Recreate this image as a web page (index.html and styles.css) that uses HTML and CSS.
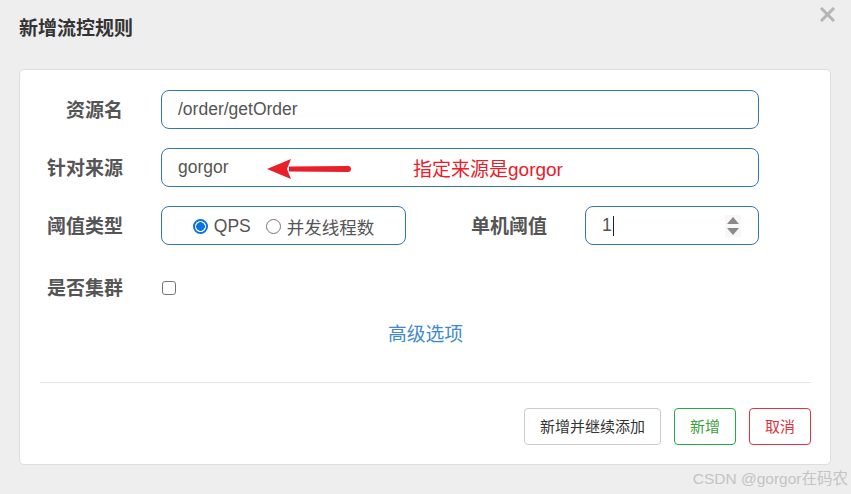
FILE: index.html
```html
<!DOCTYPE html>
<html lang="zh-CN">

<head>
  <meta charset="UTF-8">
  <meta name="viewport" content="width=device-width, initial-scale=1.0">
  <title>新增流控规则</title>
  <link rel="stylesheet" href="styles.css">
</head>

<body>
  <div id="dialog">
    <div id="header">
      <div class="title">新增流控规则</div>
      <svg class="close" width="15" height="15" viewBox="0 0 15 15">
        <path d="M2 2 L13 13 M13 2 L2 13" stroke="#b5b5b5" stroke-width="3" stroke-linecap="square" />
      </svg>
    </div>

    <div id="panel">
      <div class="rows">
        <div class="row">
          <div class="label">资源名</div>
          <div class="field wide">/order/getOrder</div>
        </div>

        <div class="row">
          <div class="label">针对来源</div>
          <div class="field wide">
            gorgor
            <svg class="arrow" width="86" height="22" viewBox="0 0 86 22">
              <path d="M22 8.5 L81 8 Q84 8 84 11 Q84 14 81 14 L22 13.5 Z" fill="#e8202a" />
              <path d="M0 11 L24 1 L20 11 L24 21 Z" fill="#e8202a" />
            </svg>
            <span class="note">指定来源是gorgor</span>
          </div>
        </div>

        <div class="row">
          <div class="label">阈值类型</div>
          <div class="field radios">
            <span class="radio checked"></span><span class="opt">QPS</span>
            <span class="radio"></span><span class="opt">并发线程数</span>
          </div>
          <div class="label mid">单机阈值</div>
          <div class="field num">
            <span>1</span><span class="caret"></span>
            <svg class="spin" width="16" height="22" viewBox="0 0 16 22">
              <rect width="16" height="22" fill="#f7f7f7" />
              <path d="M2 9 L8 2 L14 9 Z" fill="#8a8a8a" />
              <path d="M2 13 L8 20 L14 13 Z" fill="#8a8a8a" />
            </svg>
          </div>
        </div>

        <div class="row check-row">
          <div class="label">是否集群</div>
          <span class="checkbox"></span>
        </div>
      </div>

      <div class="advanced">高级选项</div>

      <div class="divider"></div>

      <div class="actions">
        <div class="btn">新增并继续添加</div>
        <div class="btn ok">新增</div>
        <div class="btn cancel">取消</div>
      </div>
    </div>
  </div>

  <div id="watermark">CSDN @gorgor在码农</div>
</body>

</html>
```

FILE: styles.css
```css
body {
  width: 851px;
  height: 494px;
  margin: 0;
  overflow: hidden;
  background-color: #eeeeee;
  font-family: "Liberation Sans", "Noto Sans CJK SC", sans-serif;
  color: #555;
  position: relative;
}

#header {
  position: relative;
  height: 69px;
  padding-left: 19px;
  box-sizing: border-box;
}

#header .title {
  padding-top: 16px;
  line-height: 26px;
  font-size: 19px;
  font-weight: bold;
  color: #333;
}

#header .close {
  position: absolute;
  top: 7px;
  right: 16px;
}

#panel {
  width: 812px;
  margin-left: 19px;
  box-sizing: border-box;
  background-color: white;
  border: 1px solid #dddddd;
  border-radius: 5px;
  padding: 20px 19px 19px 20px;
}

.rows {
  display: flex;
  flex-direction: column;
  gap: 19px;
}

.row {
  display: flex;
  align-items: center;
  height: 39px;
}

.label {
  width: 83px;
  margin-right: 38px;
  padding-top: 3px;
  text-align: right;
  font-size: 19px;
  font-weight: bold;
  color: #555;
  line-height: 36px;
  white-space: nowrap;
}

.label.mid {
  width: 141px;
}

.field {
  position: relative;
  height: 39px;
  box-sizing: border-box;
  border: 1px solid #3276b7;
  border-radius: 8px;
  padding: 0 16px;
  display: flex;
  align-items: center;
  font-size: 17.5px;
  color: #555;
}

.field.wide {
  width: 598px;
}

.arrow {
  position: absolute;
  left: 105px;
  top: 9px;
}

.note {
  position: absolute;
  left: 251px;
  top: 5px;
  font-size: 19px;
  color: #e8202a;
  white-space: nowrap;
}

.field.radios {
  width: 245px;
  justify-content: center;
  padding: 0;
  padding-top: 2px;
}

.radio {
  width: 15px;
  height: 15px;
  box-sizing: border-box;
  border: 1px solid #767676;
  border-radius: 50%;
  margin-right: 6px;
}

.radio.checked {
  border: 2px solid #0b72e0;
  background: radial-gradient(circle, #0b72e0 4px, white 4.6px);
}

.opt {
  margin-right: 15px;
}

.opt:last-child {
  margin-right: 0;
}

.field.num {
  width: 174px;
}

.caret {
  width: 1px;
  height: 20px;
  margin-left: 1px;
  background-color: #222;
}

.spin {
  position: absolute;
  right: 17px;
  top: 8px;
}

.check-row {
  margin-top: 4px;
}

.checkbox {
  width: 14px;
  height: 14px;
  box-sizing: border-box;
  border: 1px solid #767676;
  border-radius: 3px;
  margin-left: 1px;
}

.advanced {
  margin-top: 14px;
  line-height: 27px;
  text-align: center;
  font-size: 18.75px;
  color: #4189cf;
}

.divider {
  margin-top: 34px;
  border-top: 1px solid #e5e5e5;
}

.actions {
  display: flex;
  justify-content: flex-end;
  gap: 13px;
  padding-top: 25px;
}

.btn {
  height: 37px;
  line-height: 35px;
  box-sizing: border-box;
  padding: 0 15px;
  border: 1px solid #cccccc;
  border-radius: 4px;
  font-size: 15px;
  color: #333;
}

.btn.ok {
  border-color: #28a745;
  color: #3b9f3b;
}

.btn.cancel {
  border-color: #dc3545;
  color: #e0323f;
}

#watermark {
  position: absolute;
  right: 3px;
  bottom: 6px;
  font-size: 15.5px;
  color: #c4c4c4;
}
```
